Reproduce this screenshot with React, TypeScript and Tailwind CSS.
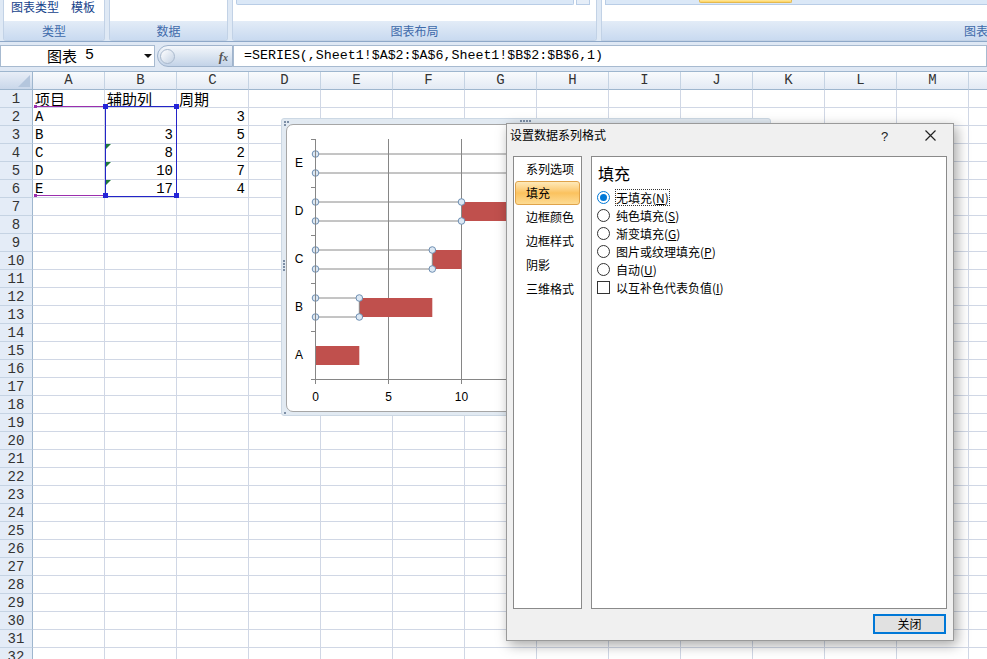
import React from 'react';

const COLS = ['A', 'B', 'C', 'D', 'E', 'F', 'G', 'H', 'I', 'J', 'K', 'L', 'M', 'N'];
const DATA: Record<number, [string, string, string]> = {
  1: ['项目', '辅助列', '周期'],
  2: ['A', '', '3'],
  3: ['B', '3', '5'],
  4: ['C', '8', '2'],
  5: ['D', '10', '7'],
  6: ['E', '17', '4'],
};

const mono = "font-['Liberation_Mono','Noto_Sans_CJK_SC',monospace]";
const cjk = "font-['Noto_Sans_CJK_SC','Noto_Sans',sans-serif]";

function Ribbon() {
  return (
    <div className="flex h-[42px] bg-[#dfe9f5] border-b border-[#8ea8c8]">
      <div className="ml-[3px] w-[102px] shrink-0 flex flex-col border-x border-b border-[#c2d2e6] rounded-b-[3px] overflow-hidden">
        <div className="h-[22px] bg-white flex items-start pl-[7px] text-[12px] leading-[14px] text-[#15428b] gap-[12px]">
          <span className={cjk}>图表类型</span>
          <span className={cjk}>模板</span>
        </div>
        <div className={`flex-1 bg-gradient-to-b from-[#e3ecf7] to-[#c9daf0] text-center text-[12px] leading-[19px] text-[#3e6aaa] ${cjk}`}>类型</div>
      </div>
      <div className="ml-[4px] w-[119px] shrink-0 flex flex-col border-x border-b border-[#c2d2e6] rounded-b-[3px] overflow-hidden">
        <div className="h-[22px] bg-white" />
        <div className={`flex-1 bg-gradient-to-b from-[#e3ecf7] to-[#c9daf0] text-center text-[12px] leading-[19px] text-[#3e6aaa] ${cjk}`}>数据</div>
      </div>
      <div className="ml-[4px] w-[365px] shrink-0 flex flex-col border-x border-b border-[#c2d2e6] rounded-b-[3px] overflow-hidden">
        <div className="h-[22px] bg-white flex items-start pl-[3px]">
          <div className="w-[338px] h-[5px] bg-[#dbe8f7] border-x border-b border-[#b9cde6] rounded-b-[2px]" />
          <div className="ml-[2px] w-[14px] h-[5px] bg-[#e6eef8] border-x border-b border-[#b9cde6]" />
        </div>
        <div className={`flex-1 bg-gradient-to-b from-[#e3ecf7] to-[#c9daf0] text-center text-[12px] leading-[19px] text-[#3e6aaa] ${cjk}`}>图表布局</div>
      </div>
      <div className="ml-[4px] flex-1 flex flex-col border-l border-b border-[#c2d2e6] overflow-hidden">
        <div className="h-[22px] bg-white pl-[3px]">
          <div className="relative h-[5px] bg-[#dbe8f7] border-l border-b border-[#b9cde6]">
            <div className="absolute left-[93px] top-0 w-[93px] h-[3px] bg-gradient-to-b from-[#ffe9a0] to-[#ffd35a] border-x border-b border-[#e4b94f] rounded-b-[2px]" />
          </div>
        </div>
        <div className={`flex-1 bg-gradient-to-b from-[#e3ecf7] to-[#c9daf0] pl-[362px] whitespace-nowrap text-[12px] leading-[19px] text-[#3e6aaa] ${cjk}`}>
          图表工具
        </div>
      </div>
    </div>
  );
}

function FormulaBar() {
  return (
    <div className="h-[30px] bg-[#dfe8f4] flex flex-col">
      <div className="mt-[3px] h-[22px] flex">
        <div className="w-[155px] shrink-0 bg-white border border-[#a7bad0] flex items-center relative">
          <span className={`ml-[46px] text-[15px] text-black ${cjk}`}>图表</span>
          <span className={`ml-[8px] text-[15px] text-black ${mono}`}>5</span>
          <div className="absolute left-[143px] top-[8px] w-0 h-0 border-l-[4px] border-r-[4px] border-t-[4px] border-l-transparent border-r-transparent border-t-[#111]" />
        </div>
        <div className="ml-[2px] w-[76px] shrink-0 h-[22px] rounded-l-full bg-gradient-to-b from-[#f4f7fb] via-[#dbe5f1] to-[#c3d3e8] border border-[#9fb3cc] flex items-center relative">
          <div className="ml-[2px] w-[15px] h-[15px] rounded-full bg-gradient-to-br from-white to-[#c4d2e4] border border-[#a9b9cd]" />
          <span className="absolute right-[4px] top-[1px] font-['Liberation_Serif',serif] italic font-bold text-[13px] text-[#555]">f<span className="text-[10px]">x</span></span>
        </div>
        <div className={`flex-1 bg-white border border-[#a7bad0] pl-[10px] text-[13.3px] leading-[20px] text-black ${mono}`}>
          =SERIES(,Sheet1!$A$2:$A$6,Sheet1!$B$2:$B$6,1)
        </div>
      </div>
      <div className="flex-1 border-b border-[#9eb6ce]" />
    </div>
  );
}

function Sheet() {
  const rows = Array.from({ length: 32 }, (_, i) => i + 1);
  return (
    <div className="w-[1041px]">
      <div className="flex h-[18px]">
        <div className="w-[33px] shrink-0 bg-gradient-to-b from-[#e8eef7] to-[#c9d7ea] border-r border-b border-[#9eb6ce] relative">
          <div className="absolute right-[2px] bottom-[2px] w-[12px] h-[12px] bg-[#b4c6dd] [clip-path:polygon(100%_0,100%_100%,0_100%)]" />
        </div>
        {COLS.map((c) => (
          <div
            key={c}
            className={`w-[72px] shrink-0 bg-gradient-to-b from-[#f9fbfd] to-[#e3eaf4] border-r border-b border-[#c5d3e3] border-b-[#9eb6ce] text-center text-[14px] leading-[17px] text-[#333] ${mono}`}
          >
            {c}
          </div>
        ))}
      </div>
      {rows.map((r) => {
        const d = DATA[r];
        return (
          <div key={r} className="flex h-[18px]">
            <div className={`w-[33px] shrink-0 bg-[#e4ecf7] border-r border-b border-[#9eb6ce] border-b-[#c5d3e3] text-center text-[14px] leading-[18px] text-[#333] ${mono}`}>
              {r}
            </div>
            {COLS.map((c, ci) => {
              let content: React.ReactNode = null;
              if (d && ci < 3) {
                const v = d[ci];
                if (r === 1) {
                  content = <div className={`pl-[2px] text-[15px] leading-[17px] text-black ${cjk}`}>{v}</div>;
                } else if (ci === 0) {
                  content = <div className={`pl-[2px] text-[14px] leading-[18px] text-black ${mono}`}>{v}</div>;
                } else {
                  content = <div className={`text-right pr-[3px] text-[14px] leading-[18px] text-black ${mono}`}>{v}</div>;
                }
              }
              const tri = ci === 1 && r >= 4 && r <= 6;
              return (
                <div key={c} className="w-[72px] shrink-0 border-r border-b border-[#d0d7e5] relative leading-[17px]">
                  {content}
                  {tri && (
                    <div className="absolute left-[1px] top-0 w-0 h-0 border-t-[5px] border-r-[5px] border-t-[#1f7a3a] border-r-transparent" />
                  )}
                </div>
              );
            })}
          </div>
        );
      })}
    </div>
  );
}

function Selection() {
  return (
    <>
      <div className="absolute left-[35px] top-[106px] w-[70px] h-[1px] bg-[#9b2fae]" />
      <div className="absolute left-[35px] top-[195px] w-[70px] h-[1px] bg-[#9b2fae]" />
      <div className="absolute left-[105px] top-[106px] w-[72px] h-[91px] border border-[#2424c8]" />
      <div className="absolute left-[34px] top-[105px] w-[3px] h-[3px] bg-[#9b2fae]" />
      <div className="absolute left-[34px] top-[194px] w-[3px] h-[3px] bg-[#9b2fae]" />
      <div className="absolute left-[103px] top-[104px] w-[5px] h-[5px] bg-[#2424d8]" />
      <div className="absolute left-[103px] top-[193px] w-[5px] h-[5px] bg-[#2424d8]" />
      <div className="absolute left-[174px] top-[104px] w-[5px] h-[5px] bg-[#2424d8]" />
      <div className="absolute left-[174px] top-[193px] w-[5px] h-[5px] bg-[#2424d8]" />
    </>
  );
}

const U = 14.6;
const X0 = 314.5;
const xv = (v: number) => X0 + v * U;

function Chart() {
  const cats = [
    { name: 'A', c: 354, h: 0, p: 3 },
    { name: 'B', c: 306, h: 3, p: 5 },
    { name: 'C', c: 258, h: 8, p: 2 },
    { name: 'D', c: 210, h: 10, p: 7 },
    { name: 'E', c: 162, h: 17, p: 4 },
  ];
  return (
    <div className="absolute left-[281px] top-[118px] w-[490px] h-[298px] bg-[#e2eaf2] border border-[#ccd8e4] rounded-[3px]">
      <div className="absolute left-[2px] top-[2px] w-[2px] h-[2px] bg-[#7d8fa6]" />
      <div className="absolute left-[5px] top-[2px] w-[2px] h-[2px] bg-[#7d8fa6]" />
      <div className="absolute left-[2px] top-[5px] w-[2px] h-[2px] bg-[#7d8fa6]" />
      <div className="absolute left-[1px] top-[141px] w-[2px] h-[2px] bg-[#7d8fa6]" />
      <div className="absolute left-[1px] top-[144px] w-[2px] h-[2px] bg-[#7d8fa6]" />
      <div className="absolute left-[1px] top-[147px] w-[2px] h-[2px] bg-[#7d8fa6]" />
      <div className="absolute left-[1px] top-[150px] w-[2px] h-[2px] bg-[#7d8fa6]" />
      <div className="absolute left-[2px] bottom-[1px] w-[2px] h-[2px] bg-[#7d8fa6]" />
      <div className="absolute left-[238px] top-[1px] w-[2px] h-[2px] bg-[#7d8fa6]" />
      <div className="absolute left-[241px] top-[1px] w-[2px] h-[2px] bg-[#7d8fa6]" />
      <div className="absolute left-[244px] top-[1px] w-[2px] h-[2px] bg-[#7d8fa6]" />
      <div className="absolute left-[247px] top-[1px] w-[2px] h-[2px] bg-[#7d8fa6]" />
      <div className="absolute left-[4px] top-[5px] right-[4px] bottom-[3px] bg-white border border-[#a6a6a6] rounded-[7px] overflow-hidden">
        <svg width={480} height={290} className="absolute left-0 top-0">
          <g transform="translate(-286 -124)">
            {[5, 10, 15, 20, 25].map((v) => (
              <line key={v} x1={xv(v)} y1={138} x2={xv(v)} y2={378} stroke="#868686" strokeWidth={1} />
            ))}
            {cats.map((k) => (
              <rect key={'r' + k.name} x={xv(k.h)} y={k.c - 9} width={k.p * U} height={19} fill="#c0504d" />
            ))}
            {cats.map((k) =>
              k.h > 0 ? (
                <g key={'h' + k.name}>
                  <line x1={X0} y1={k.c - 9} x2={xv(k.h)} y2={k.c - 9} stroke="#8a8a8a" />
                  <line x1={X0} y1={k.c + 10} x2={xv(k.h)} y2={k.c + 10} stroke="#8a8a8a" />
                  <line x1={xv(k.h)} y1={k.c - 9} x2={xv(k.h)} y2={k.c + 10} stroke="#8a8a8a" />
                  {[
                    [X0, k.c - 9],
                    [X0, k.c + 10],
                    [xv(k.h), k.c - 9],
                    [xv(k.h), k.c + 10],
                  ].map(([x, y], i) => (
                    <circle key={i} cx={x} cy={y} r={3.3} fill="#dce8f4" stroke="#6f8fb2" strokeWidth={1} />
                  ))}
                </g>
              ) : null
            )}
            <line x1={X0} y1={138} x2={X0} y2={378.5} stroke="#868686" />
            <line x1={X0} y1={378.5} x2={700} y2={378.5} stroke="#868686" />
            {[138.5, 186.5, 234.5, 282.5, 330.5, 378.5].map((y) => (
              <line key={y} x1={310} y1={y} x2={X0} y2={y} stroke="#868686" />
            ))}
            {[0, 5, 10, 15, 20].map((v) => (
              <line key={'t' + v} x1={xv(v)} y1={378} x2={xv(v)} y2={383} stroke="#868686" />
            ))}
            {cats.map((k) => (
              <text key={'l' + k.name} x={298} y={k.c + 4} fontSize={12} textAnchor="middle" fontFamily="'Liberation Sans', Arial, sans-serif" fill="#000">
                {k.name}
              </text>
            ))}
            {[0, 5, 10, 15].map((v) => (
              <text key={'x' + v} x={xv(v)} y={400} fontSize={12} textAnchor="middle" fontFamily="'Liberation Sans', Arial, sans-serif" fill="#000">
                {v}
              </text>
            ))}
          </g>
        </svg>
      </div>
    </div>
  );
}

function Radio({ checked }: { checked?: boolean }) {
  return checked ? (
    <div className="w-[13px] h-[13px] rounded-full border border-[#0078d7] bg-white flex items-center justify-center">
      <div className="w-[7px] h-[7px] rounded-full bg-[#0078d7]" />
    </div>
  ) : (
    <div className="w-[13px] h-[13px] rounded-full border border-[#333] bg-white" />
  );
}

function Label({ text, k }: { text: string; k: string }) {
  return (
    <span className={`text-[12px] text-black ${cjk}`}>
      {text}(<span className="underline">{k}</span>)
    </span>
  );
}

function Dialog() {
  const items = ['系列选项', '填充', '边框颜色', '边框样式', '阴影', '三维格式'];
  const opts: [string, string][] = [
    ['纯色填充', 'S'],
    ['渐变填充', 'G'],
    ['图片或纹理填充', 'P'],
    ['自动', 'U'],
  ];
  return (
    <div className="absolute left-[506px] top-[123px] w-[448px] h-[518px] bg-[#f0f0f0] border border-[#9a9a9a] shadow-[3px_4px_12px_rgba(0,0,0,0.35)] flex flex-col">
      <div className="h-[22px] flex items-center relative">
        <span className={`ml-[3px] text-[12px] text-black ${cjk}`}>设置数据系列格式</span>
        <span className="absolute left-[374px] top-[3px] text-[13px] text-[#222] font-['Liberation_Sans',sans-serif]">?</span>
        <svg className="absolute left-[418px] top-[6px]" width={11} height={11} viewBox="0 0 11 11">
          <path d="M0.5 0.5 L10.5 10.5 M10.5 0.5 L0.5 10.5" stroke="#222" strokeWidth={1.2} />
        </svg>
      </div>
      <div className="mt-[10px] flex">
        <div className="ml-[6px] w-[69px] h-[453px] bg-white border border-[#8a8a8a] flex flex-col">
          {items.map((t, i) =>
            i === 1 ? (
              <div key={t} className="mx-[1px] h-[24px] rounded-[3px] border border-[#e0a34a] bg-gradient-to-b from-[#fee9b8] via-[#fbc25e] to-[#fddb92] flex items-center">
                <span className={`ml-[10px] text-[12px] text-black ${cjk}`}>{t}</span>
              </div>
            ) : (
              <div key={t} className="mx-[1px] h-[24px] flex items-center">
                <span className={`ml-[11px] text-[12px] text-black ${cjk}`}>{t}</span>
              </div>
            )
          )}
        </div>
        <div className="ml-[9px] w-[356px] h-[453px] bg-white border border-[#8a8a8a] flex flex-col">
          <div className={`h-[31px] pt-[6px] pl-[6px] text-[16px] leading-[20px] text-black ${cjk}`}>填充</div>
          <div className="h-[18px] flex items-center pl-[5px]">
            <Radio checked />
            <span className="ml-[5px] border border-dotted border-[#333] px-[0px] leading-[14px]">
              <Label text="无填充" k="N" />
            </span>
          </div>
          {opts.map(([t, k]) => (
            <div key={t} className="h-[18px] flex items-center pl-[5px]">
              <Radio />
              <span className="ml-[6px]">
                <Label text={t} k={k} />
              </span>
            </div>
          ))}
          <div className="h-[18px] flex items-center pl-[5px]">
            <div className="w-[13px] h-[13px] border border-[#333] bg-white" />
            <span className="ml-[6px]">
              <Label text="以互补色代表负值" k="I" />
            </span>
          </div>
        </div>
      </div>
      <div className="mt-[5px] flex justify-end pr-[7px]">
        <div className={`w-[73px] h-[20px] border-2 border-[#0078d7] bg-[#e1e1e1] flex items-center justify-center text-[12px] text-black ${cjk}`}>关闭</div>
      </div>
    </div>
  );
}

export default function App() {
  return (
    <div className="relative w-[987px] h-[659px] overflow-hidden bg-white">
      <Ribbon />
      <FormulaBar />
      <Sheet />
      <Selection />
      <Chart />
      <Dialog />
    </div>
  );
}
